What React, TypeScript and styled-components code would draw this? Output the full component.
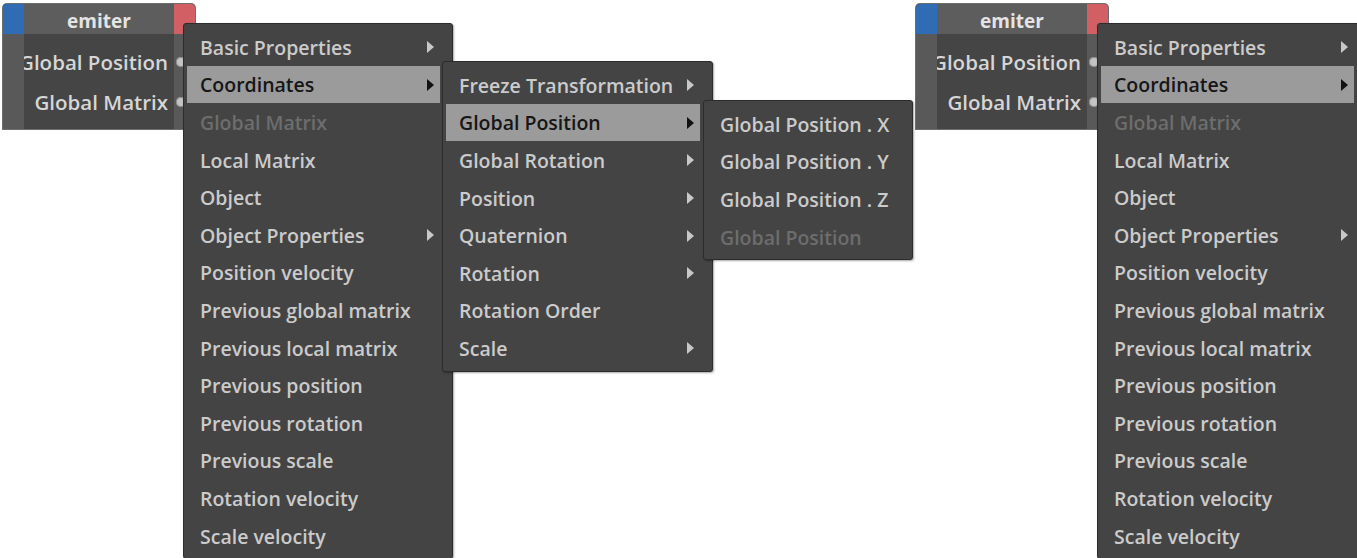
import React from 'react';
import styled, { createGlobalStyle } from 'styled-components';

const Global = createGlobalStyle`
  html, body {
    margin: 0;
    padding: 0;
    background: #ffffff;
    width: 1357px;
    height: 558px;
    overflow: hidden;
  }
  body {
    font-family: "Open Sans", "Noto Sans", sans-serif;
  }
`;

const Page = styled.div`
  display: flex;
  width: 1357px;
  height: 558px;
  overflow: hidden;
`;

const Scene = styled.div<{ $w: number }>`
  position: relative;
  flex: 0 0 ${(p) => p.$w}px;
  padding: 4px 0 0 3px;
  box-sizing: border-box;
`;

const Node = styled.div`
  width: 192px;
  height: 125px;
  display: flex;
  flex-direction: column;
  background: #454545;
  border-radius: 4px 4px 0 0;
  overflow: hidden;
  box-shadow: 0 0 0 1px #6e6e6e;
`;

const Header = styled.div`
  display: grid;
  grid-template-columns: 21px 1fr 21px;
  height: 30px;
`;

const Swatch = styled.div<{ $c: string }>`
  background: ${(p) => p.$c};
`;

const Title = styled.div`
  background: #5d5d5d;
  color: #e4e4e4;
  font-weight: 700;
  font-size: 19px;
  padding-top: 3px;
  box-sizing: border-box;
  display: flex;
  align-items: center;
  justify-content: center;
`;

const Body = styled.div`
  flex: 1;
  display: grid;
  grid-template-columns: 21px 1fr 21px;
`;

const Strip = styled.div`
  background: #595959;
  display: flex;
  flex-direction: column;
  padding-top: 8px;
  position: relative;
  z-index: 1;
`;

const Labels = styled.div`
  display: flex;
  flex-direction: column;
  align-items: flex-end;
  padding: 8px 6px 0 0;
  min-width: 0;
`;

const Label = styled.div`
  height: 40px;
  line-height: 40px;
  white-space: nowrap;
  color: #d6d6d6;
  font-size: 20.5px;
  font-weight: 600;
`;

const PortSlot = styled.div`
  height: 40px;
  display: flex;
  align-items: center;
  padding-left: 2px;
`;

const Port = styled.div`
  width: 10px;
  height: 10px;
  border-radius: 50%;
  background: #c4c4c4;
  box-shadow: inset 0 0 0 1px #8a8a8a;
`;

const Menu = styled.ul<{ $x: number; $y: number; $w: number }>`
  position: absolute;
  z-index: 2;
  left: ${(p) => p.$x}px;
  top: ${(p) => p.$y}px;
  width: ${(p) => p.$w}px;
  margin: 0;
  padding: 4px 0;
  list-style: none;
  background: #444444;
  border: 1px solid #2c2c2c;
  border-radius: 3px;
  box-sizing: border-box;
  box-shadow: 1px 1px 2px rgba(0, 0, 0, 0.35);
`;

const Item = styled.li<{ $active?: boolean; $disabled?: boolean; $narrow?: boolean }>`
  height: 37.6px;
  margin: ${(p) => (p.$narrow ? '0 3px' : '0 12px 0 3px')};
  padding: 1px 6px 0 13px;
  box-sizing: border-box;
  display: flex;
  align-items: center;
  justify-content: space-between;
  white-space: nowrap;
  font-size: 19.5px;
  font-weight: 600;
  color: ${(p) => (p.$active ? '#161616' : p.$disabled ? '#6d6d6d' : '#cbcbcb')};
  background: ${(p) => (p.$active ? '#9b9b9b' : 'transparent')};
`;

const Arrow = styled.span<{ $active?: boolean }>`
  width: 0;
  height: 0;
  border-top: 6px solid transparent;
  border-bottom: 6px solid transparent;
  border-left: 7px solid ${(p) => (p.$active ? '#111111' : '#c8c8c8')};
`;

type Entry = { label: string; sub?: boolean; active?: boolean; disabled?: boolean };

const mainMenu: Entry[] = [
  { label: 'Basic Properties', sub: true },
  { label: 'Coordinates', sub: true, active: true },
  { label: 'Global Matrix', disabled: true },
  { label: 'Local Matrix' },
  { label: 'Object' },
  { label: 'Object Properties', sub: true },
  { label: 'Position velocity' },
  { label: 'Previous global matrix' },
  { label: 'Previous local matrix' },
  { label: 'Previous position' },
  { label: 'Previous rotation' },
  { label: 'Previous scale' },
  { label: 'Rotation velocity' },
  { label: 'Scale velocity' },
];

const coordMenu: Entry[] = [
  { label: 'Freeze Transformation', sub: true },
  { label: 'Global Position', sub: true, active: true },
  { label: 'Global Rotation', sub: true },
  { label: 'Position', sub: true },
  { label: 'Quaternion', sub: true },
  { label: 'Rotation', sub: true },
  { label: 'Rotation Order' },
  { label: 'Scale', sub: true },
];

const posMenu: Entry[] = [
  { label: 'Global Position . X' },
  { label: 'Global Position . Y' },
  { label: 'Global Position . Z' },
  { label: 'Global Position', disabled: true },
];

const MenuList = ({ items, x, y, w, narrow }: { items: Entry[]; x: number; y: number; w: number; narrow?: boolean }) => (
  <Menu $x={x} $y={y} $w={w}>
    {items.map((it) => (
      <Item key={it.label} $active={it.active} $disabled={it.disabled} $narrow={narrow}>
        <span>{it.label}</span>
        {it.sub && <Arrow $active={it.active} />}
      </Item>
    ))}
  </Menu>
);

const EmitterNode = () => (
  <Node>
    <Header>
      <Swatch $c="#2f6cb4" />
      <Title>emiter</Title>
      <Swatch $c="#d25f64" />
    </Header>
    <Body>
      <Strip />
      <Labels>
        <Label>Global Position</Label>
        <Label>Global Matrix</Label>
      </Labels>
      <Strip>
        <PortSlot>
          <Port />
        </PortSlot>
        <PortSlot>
          <Port />
        </PortSlot>
      </Strip>
    </Body>
  </Node>
);

export default function App() {
  return (
    <>
      <Global />
      <Page>
        <Scene $w={913}>
          <EmitterNode />
          <MenuList items={mainMenu} x={183} y={23} w={270} />
          <MenuList items={coordMenu} x={442} y={61} w={271} />
          <MenuList items={posMenu} x={703} y={100} w={210} narrow />
        </Scene>
        <Scene $w={444}>
          <EmitterNode />
          <MenuList items={mainMenu} x={184} y={23} w={270} />
        </Scene>
      </Page>
    </>
  );
}
